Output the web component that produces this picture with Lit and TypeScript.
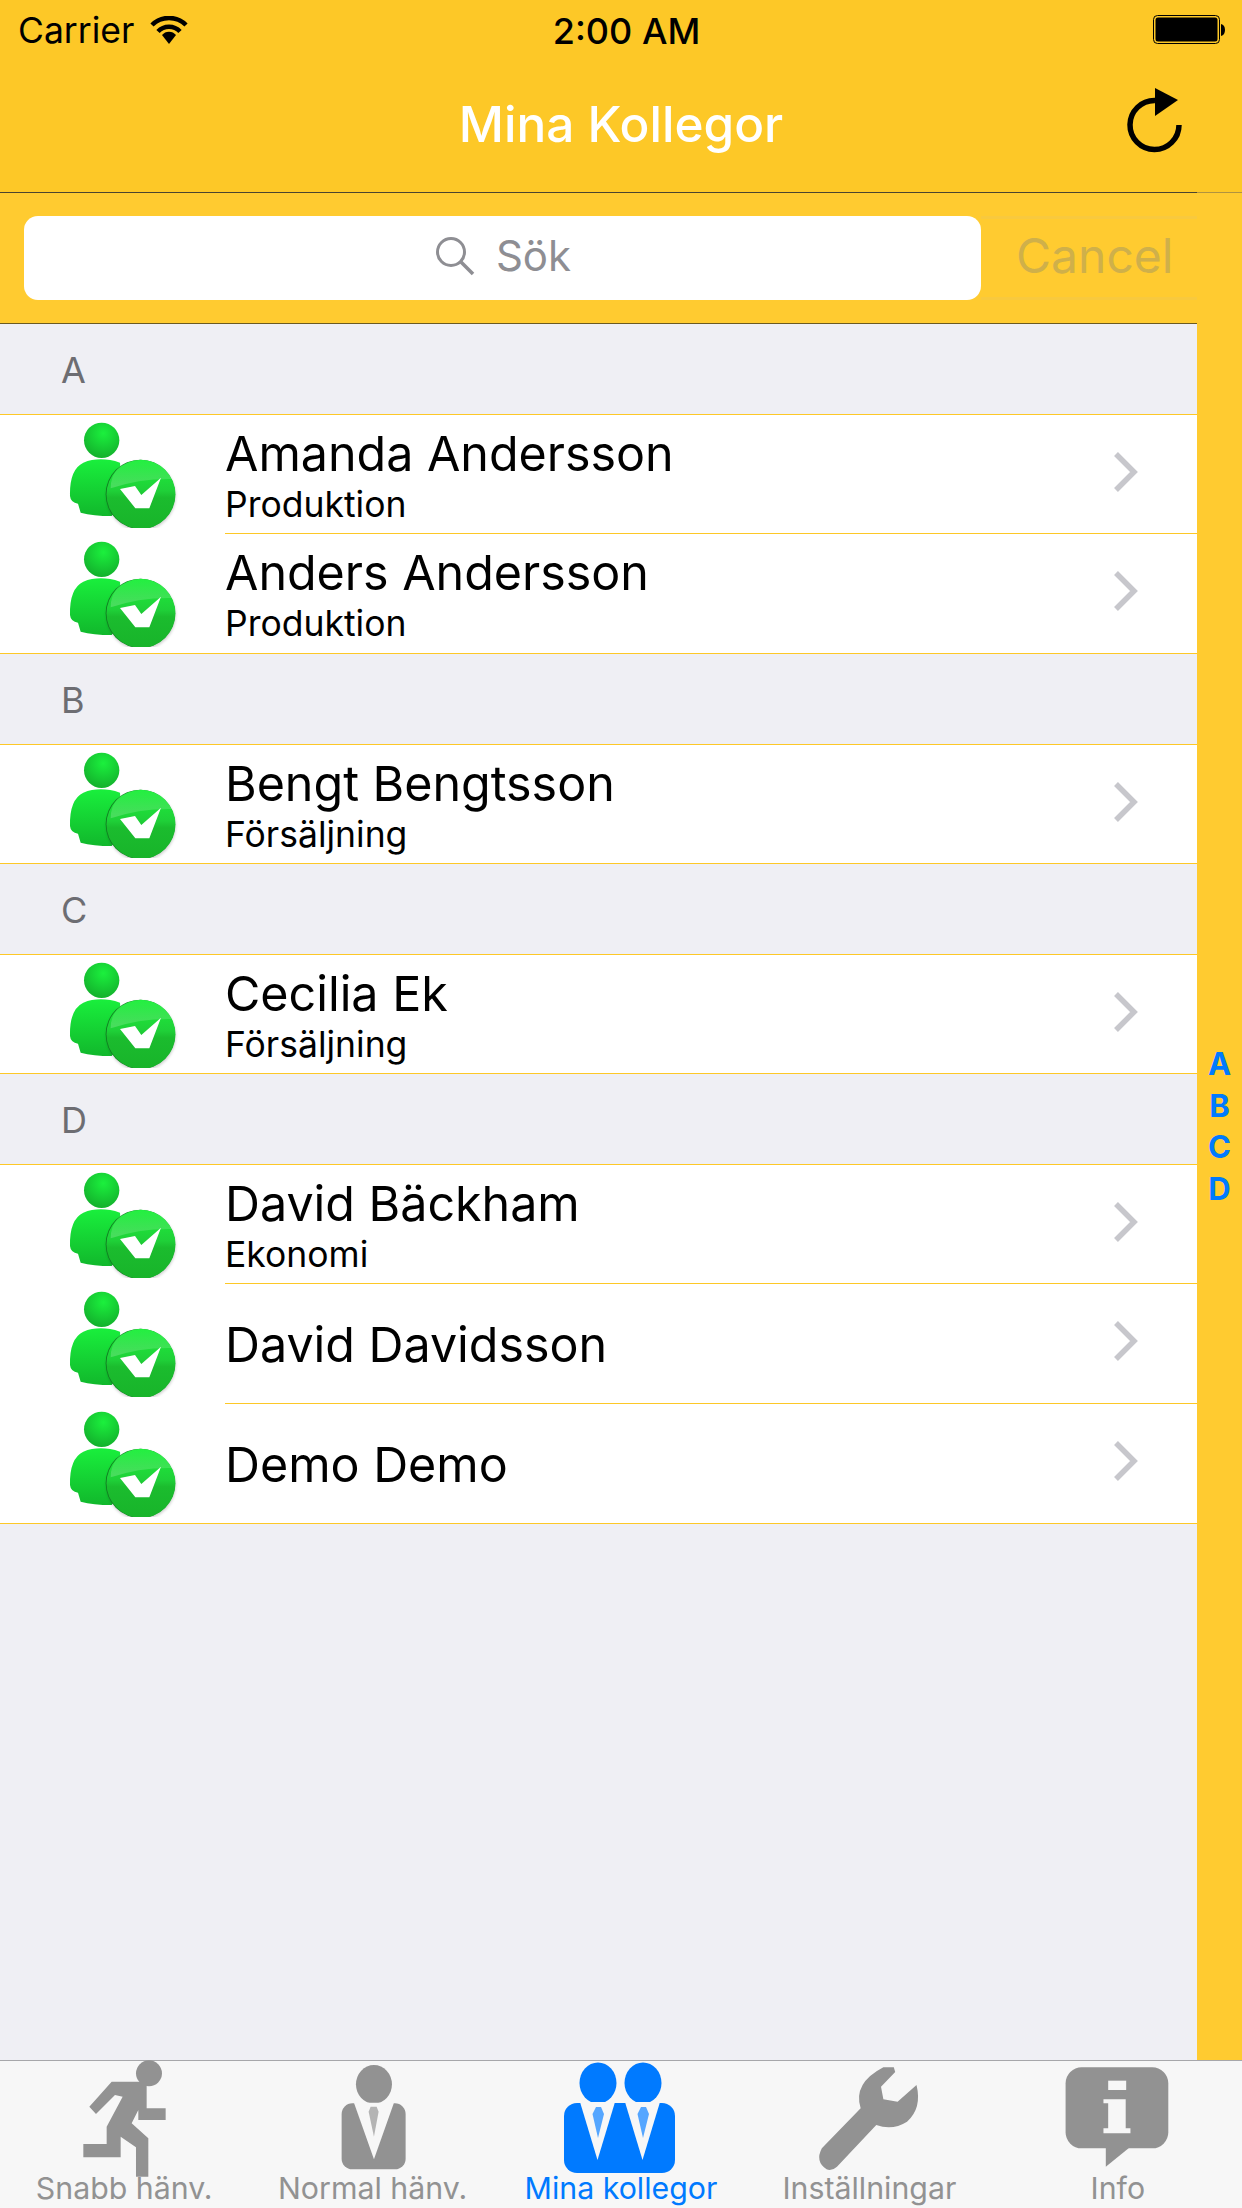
import { LitElement, html, css, svg } from "lit";
import { customElement } from "lit/decorators.js";

interface Person {
  name: string;
  dept?: string;
}

interface Section {
  letter: string;
  people: Person[];
}

const SECTIONS: Section[] = [
  {
    letter: "A",
    people: [
      { name: "Amanda Andersson", dept: "Produktion" },
      { name: "Anders Andersson", dept: "Produktion" },
    ],
  },
  { letter: "B", people: [{ name: "Bengt Bengtsson", dept: "Försäljning" }] },
  { letter: "C", people: [{ name: "Cecilia Ek", dept: "Försäljning" }] },
  {
    letter: "D",
    people: [
      { name: "David Bäckham", dept: "Ekonomi" },
      { name: "David Davidsson" },
      { name: "Demo Demo" },
    ],
  },
];

const colleagueIcon = html`<svg class="avatar" viewBox="75 45 360 336">
  <defs>
    <linearGradient id="skin" x1="0" y1="0" x2="0" y2="1">
      <stop offset="0" stop-color="#19ef3c" />
      <stop offset="1" stop-color="#11b82c" />
    </linearGradient>
    <radialGradient id="head" cx="0.55" cy="0.3" r="0.8">
      <stop offset="0" stop-color="#1bf03d" />
      <stop offset="1" stop-color="#12a82a" />
    </radialGradient>
    <linearGradient id="badge" x1="0" y1="0" x2="0" y2="1">
      <stop offset="0" stop-color="#1ef03c" />
      <stop offset="0.45" stop-color="#1fd038" />
      <stop offset="0.55" stop-color="#1bbc2e" />
      <stop offset="1" stop-color="#18b42a" />
    </linearGradient>
    <linearGradient id="gloss" x1="0" y1="0" x2="0" y2="1">
      <stop offset="0" stop-color="#fff" stop-opacity="0" />
      <stop offset="1" stop-color="#fff" stop-opacity="0.2" />
    </linearGradient>
    <filter id="soft" x="-20%" y="-20%" width="140%" height="140%">
      <feGaussianBlur stdDeviation="5" />
    </filter>
  </defs>
  <circle cx="185" cy="118" r="53" fill="url(#head)" />
  <path
    d="M130 185 Q180 165 240 185 L250 300 L215 345 Q160 345 122 335 L114 308 Q92 305 90 285 Q88 205 130 185Z"
    fill="url(#skin)"
  />
  <circle cx="303" cy="285" r="104" fill="#000" opacity="0.2" filter="url(#soft)" />
  <circle cx="301" cy="280" r="104" fill="#127a22" />
  <circle cx="303" cy="280" r="103.5" fill="url(#badge)" />
  <path
    d="M212 262 A94 94 0 0 1 396 234 Q300 232 212 262Z"
    fill="url(#gloss)"
  />
  <path
    d="M240 264 L285 255 L304 282 L363 230 L328 322 L286 322Z"
    fill="#fff"
  />
</svg>`;

const GREY = "#929292";
const BG = "#f7f7f7";
const BLUE = "#007aff";

// icon shapes are traced on a 3x crop, so each group is scaled back down
const runner = svg`<g transform="translate(0 2040) scale(.3333)" fill=${GREY}>
  <circle cx="447" cy="100" r="39" />
  <path d="M268 200 L335 125 L440 125 L440 205 L497 205 L497 240 L415 240 L415 210 L395 250 L445 295 L445 410 L408 410 L408 322 L362 290 L362 352 L250 352 L250 312 L320 312 L320 260 L368 170 L345 165 L288 222Z" />
</g>`;

const suit = svg`<g transform="translate(0 2040) scale(.3333)">
  <ellipse cx="1122" cy="133" rx="54" ry="58" fill=${GREY} />
  <rect x="1025" y="190" width="192" height="198" rx="32" fill=${GREY} />
  <path d="M1062 188 L1122 358 L1182 188Z" fill=${BG} />
  <path d="M1106 215 L1112 200 L1130 200 L1136 215 L1122 290Z" fill="#b4b4b4" />
</g>`;

const colleagues = svg`<g fill=${BLUE}>
  <ellipse cx="598" cy="2083" rx="18.5" ry="20.5" />
  <ellipse cx="643" cy="2083" rx="18.5" ry="20.5" />
  <rect x="564" y="2103" width="111" height="70" rx="13" />
  <path d="M580 2102 L597.5 2160 L615 2102Z" fill=${BG} />
  <path d="M625 2102 L642.5 2160 L660 2102Z" fill=${BG} />
  <path d="M592.5 2114 L596 2107 L601 2107 L604 2114 L598 2138Z" fill="#55a6ff" />
  <path d="M637.5 2114 L641 2107 L646 2107 L649 2114 L643 2138Z" fill="#55a6ff" />
</g>`;

const wrench = svg`<g transform="translate(500 2040) scale(.4733 .3333)" fill=${GREY}>
  <path d="M832 82 L835 96 L805 140 L810 178 L840 185 L880 135 Q892 205 860 245 Q830 272 795 255 L712 380 Q700 395 690 388 Q665 365 680 325 L762 205 Q745 130 810 82Z" />
</g>`;

const info = svg`<g transform="translate(500 2040) scale(.4733 .3333)">
  <rect x="1195" y="82" width="217" height="243" rx="34" ry="48" fill=${GREY} />
  <path d="M1280 320 L1280 380 L1332 320Z" fill=${GREY} />
  <rect x="1285" y="122" width="38" height="28" fill=${BG} />
  <path d="M1275 178 L1322 178 L1322 265 L1332 265 L1332 280 L1275 280 L1275 265 L1285 265 L1285 190 L1275 190Z" fill=${BG} />
</g>`;

const TABS = [
  { label: "Snabb hänv.", box: "64 2058 120 120", icon: runner },
  { label: "Normal hänv.", box: "313 2058 120 120", icon: suit },
  { label: "Mina kollegor", box: "561 2058 120 120", icon: colleagues, active: true },
  { label: "Inställningar", box: "809 2058 120 120", icon: wrench },
  { label: "Info", box: "1058 2058 120 120", icon: info },
];

@customElement("app-root")
export class AppRoot extends LitElement {
  static styles = css`
    :host {
      display: flex;
      flex-direction: column;
      width: 1242px;
      height: 2208px;
      overflow: hidden;
      font-family: Inter, "Liberation Sans", sans-serif;
      color: #000;
      background: #efeff4;
    }
    .top {
      height: 192px;
      background: #fdc827;
      position: relative;
    }
    .status {
      height: 60px;
      display: grid;
      grid-template-columns: 1fr auto 1fr;
      align-items: center;
      padding: 0 17px 0 18px;
      font-size: 35.5px;
    }
    .status-left {
      display: flex;
      align-items: center;
      gap: 16px;
    }
    .time {
      font-size: 36px;
      font-weight: 500;
      margin: 2px 0 0 10px;
    }
    .status-right {
      display: flex;
      justify-content: flex-end;
    }
    .nav {
      height: 132px;
      display: flex;
      align-items: center;
      justify-content: center;
      padding-bottom: 5px;
      box-sizing: border-box;
      position: relative;
    }
    .title {
      color: #fff;
      font-size: 49.5px;
      font-weight: 500;
    }
    .refresh {
      position: absolute;
      right: 58px;
      top: 28px;
    }
    .main {
      flex: 1;
      display: flex;
      min-height: 0;
    }
    .column {
      width: 1197px;
      display: flex;
      flex-direction: column;
    }
    .rule {
      height: 1px;
      background: #4a4430;
    }
    .search {
      height: 130px;
      background: #ffcb30;
      display: flex;
      align-items: center;
      padding: 0 0 0 24px;
      border-bottom: 1px solid #6b5a20;
    }
    .field {
      width: 957px;
      height: 84px;
      box-sizing: border-box;
      padding: 0 0 5px 1px;
      background: #fff;
      border-radius: 14px;
      display: flex;
      align-items: center;
      justify-content: center;
      gap: 21px;
      color: #8e8e93;
      font-size: 42px;
    }
    .cancel-box {
      flex: 1;
      height: 84px;
      box-sizing: border-box;
      border-top: 3px solid #f8c93e;
      border-bottom: 3px solid #f8c93e;
      display: flex;
      align-items: center;
      padding: 0 0 5px 35px;
      color: #cfb04a;
      font-size: 48px;
    }
    .list {
      flex: 1;
    }
    .letter {
      height: 88px;
      padding: 2px 0 0 61px;
      display: flex;
      align-items: center;
      font-size: 36px;
      color: #6d6d72;
      border-bottom: 1px solid #fdc827;
    }
    .rows {
      background: #fff;
      border-bottom: 1px solid #fdc827;
    }
    .row {
      height: 119px;
      display: flex;
      position: relative;
    }
    .row:only-child {
      height: 118px;
    }
    .row:not(:first-child):not(:last-child) {
      height: 120px;
    }
    .avatar {
      width: 120px;
      height: 112px;
      margin: 1px 0 0 65px;
      flex: none;
    }
    .text {
      flex: 1;
      margin-left: 40px;
      padding-top: 2px;
      display: flex;
      flex-direction: column;
      justify-content: center;
      border-bottom: 1px solid #fdc827;
    }
    .row:last-child .text {
      border-bottom: none;
    }
    .name {
      font-size: 48.4px;
      line-height: 56px;
    }
    .dept {
      margin-top: 3px;
      font-size: 35.5px;
      line-height: 40px;
    }
    .chevron {
      position: absolute;
      right: 58px;
      top: 36px;
    }
    .index {
      width: 45px;
      background: #ffcb30;
      display: flex;
      flex-direction: column;
      align-items: center;
      justify-content: center;
      position: relative;
      color: #007aff;
      font-size: 31px;
      font-weight: 700;
      line-height: 41.5px;
    }
    .index::before {
      content: "";
      position: absolute;
      left: 0;
      right: 0;
      top: 0;
      height: 1px;
      background: #b09340;
    }
    .tabs {
      height: 148px;
      box-sizing: border-box;
      background: #f7f7f7;
      border-top: 1px solid #a7a7aa;
      display: grid;
      grid-template-columns: repeat(5, 1fr);
    }
    .tab {
      display: flex;
      flex-direction: column;
      align-items: center;
      color: #929292;
      font-size: 30.3px;
      position: relative;
    }
    .tab.active {
      color: #007aff;
    }
    .tab svg {
      width: 120px;
      height: 120px;
      margin-top: -3px;
      flex: none;
    }
    .tab span {
      margin-top: -7px;
      line-height: 34px;
      position: relative;
    }
  `;

  render() {
    return html`
      <div class="top">
        <div class="status">
          <div class="status-left">
            <span>Carrier</span>
            <svg width="38" height="28" viewBox="0 0 38 28">
              <path d="M2 9 A24 24 0 0 1 36 9" fill="none" stroke="#000" stroke-width="4.5" />
              <path d="M8 15.5 A15 15 0 0 1 30 15.5" fill="none" stroke="#000" stroke-width="4.5" />
              <path d="M12 19 A9 9 0 0 1 26 19 L19 28Z" fill="#000" />
            </svg>
          </div>
          <span class="time">2:00 AM</span>
          <div class="status-right">
            <svg width="72" height="30" viewBox="0 0 72 30">
              <rect x="0.5" y="0.5" width="66" height="28" rx="4" fill="none" stroke="#000" />
              <rect x="2.5" y="2.5" width="62" height="24" rx="2.5" fill="#000" />
              <path d="M68 9 Q72 10 72 15 Q72 20 68 21Z" fill="#000" />
            </svg>
          </div>
        </div>
        <div class="nav">
          <span class="title">Mina Kollegor</span>
          <svg class="refresh" width="58" height="72" viewBox="1126 91 58 72">
            <path d="M1155 103.5 A24.5 24.5 0 1 0 1179 128" fill="none" stroke="#000" stroke-width="5.5" />
            <path d="M1155 91 L1178 103 L1155 119Z" fill="#000" />
          </svg>
        </div>
      </div>
      <div class="main">
        <div class="column">
          <div class="rule"></div>
          <div class="search">
            <div class="field">
              <svg width="40" height="40" viewBox="0 0 40 40">
                <circle cx="16" cy="16" r="13.5" fill="none" stroke="#8e8e93" stroke-width="3" />
                <path d="M26 26 L38 38" stroke="#8e8e93" stroke-width="3.5" />
              </svg>
              <span>Sök</span>
            </div>
            <div class="cancel-box">Cancel</div>
          </div>
          <div class="list">
            ${SECTIONS.map(
              (s) => html`
                <div class="letter">${s.letter}</div>
                <div class="rows">
                  ${s.people.map(
                    (p) => html`
                      <div class="row">
                        ${colleagueIcon}
                        <div class="text">
                          <div class="name">${p.name}</div>
                          ${p.dept ? html`<div class="dept">${p.dept}</div>` : ""}
                        </div>
                        <svg class="chevron" width="26" height="42" viewBox="0 0 26 42">
                          <path d="M3 3 L21 21 L3 39" fill="none" stroke="#c7c7cc" stroke-width="5.5" />
                        </svg>
                      </div>
                    `
                  )}
                </div>
              `
            )}
          </div>
        </div>
        <div class="index">
          ${SECTIONS.map((s) => html`<div>${s.letter}</div>`)}
        </div>
      </div>
      <div class="tabs">
        ${TABS.map(
          (t) => html`
            <div class="tab ${t.active ? "active" : ""}">
              <svg viewBox=${t.box}>${t.icon}</svg>
              <span>${t.label}</span>
            </div>
          `
        )}
      </div>
    `;
  }
}
